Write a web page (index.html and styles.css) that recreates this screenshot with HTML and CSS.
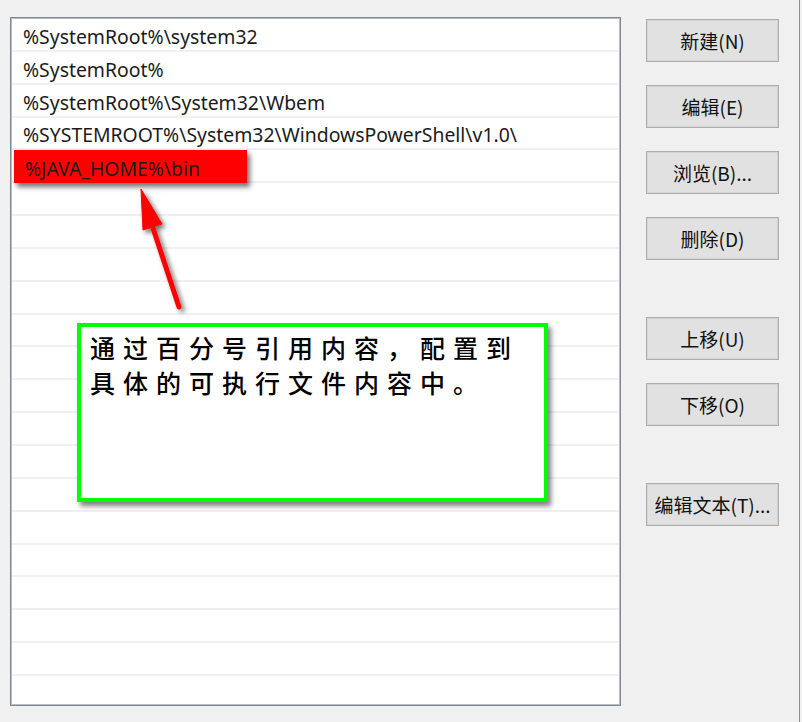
FILE: index.html
```html
<!DOCTYPE html>
<html lang="zh-CN">
<head>
<meta charset="utf-8">
<title>编辑环境变量</title>
<link rel="stylesheet" href="styles.css">
</head>
<body>
<div class="window">
  <div class="list">
    <div class="row"><span class="txt">%SystemRoot%\system32</span></div>
    <div class="row"><span class="txt">%SystemRoot%</span></div>
    <div class="row"><span class="txt">%SystemRoot%\System32\Wbem</span></div>
    <div class="row"><span class="txt">%SYSTEMROOT%\System32\WindowsPowerShell\v1.0\</span></div>
    <div class="row"><span class="mark">%JAVA_HOME%\bin</span></div>
    <div class="row"></div>
    <div class="row"></div>
    <div class="row"></div>
    <div class="row"></div>
    <div class="row"></div>
    <div class="row"></div>
    <div class="row"></div>
    <div class="row"></div>
    <div class="row"></div>
    <div class="row"></div>
    <div class="row"></div>
    <div class="row"></div>
    <div class="row"></div>
    <div class="row"></div>
    <div class="row"></div>
    <div class="row"></div>
  </div>
  <div class="buttons">
    <button class="btn">新建(N)</button>
    <button class="btn">编辑(E)</button>
    <button class="btn">浏览(B)...</button>
    <button class="btn">删除(D)</button>
    <button class="btn btn-sep">上移(U)</button>
    <button class="btn">下移(O)</button>
    <button class="btn btn-sep2">编辑文本(T)...</button>
  </div>
</div>

<svg class="arrow" width="802" height="722" viewBox="0 0 802 722" aria-hidden="true">
  <defs>
    <filter id="sh" x="-50%" y="-50%" width="200%" height="200%">
      <feDropShadow dx="3" dy="3" stdDeviation="2.5" flood-color="#000" flood-opacity="0.55"/>
    </filter>
  </defs>
  <g filter="url(#sh)" fill="#ff0000" stroke="#ff0000">
    <line x1="179" y1="307" x2="151" y2="222" stroke-width="5" stroke-linecap="round"/>
    <polygon points="141,189 162,224 143,230" stroke-width="1" stroke-linejoin="round"/>
  </g>
</svg>

<div class="note">通过百分号引用内容，配置到具体的可执行文件内容中。</div>
</body>
</html>
```
FILE: styles.css
```css
html, body {
  margin: 0;
  padding: 0;
}
body {
  width: 802px;
  height: 722px;
  background: #f0f0f0;
  position: relative;
  overflow: hidden;
  font-family: "Noto Sans", "Noto Sans CJK SC", sans-serif;
}
.window {
  display: flex;
  align-items: flex-start;
  height: 722px;
  width: 800px;
  box-sizing: border-box;
  border-right: 1px solid #8e8e8e;
  padding: 17px 0 0 10px;
}
.list {
  width: 611px;
  height: 689px;
  box-sizing: border-box;
  border: 1px solid #828790;
  box-shadow: inset 0 0 0 1px #b9bcc2;
  background: #fff;
  padding: 1px;
  overflow: hidden;
  display: flex;
  flex-direction: column;
}
.row {
  flex: 0 0 32.85px;
  height: 32.85px;
  box-sizing: border-box;
  border-bottom: 2px solid #f0f0f0;
  display: flex;
  align-items: center;
  font-size: 19.4px;
  color: #1b1b1b;
  padding-top: 4px;
}
.txt {
  padding-left: 11px;
  white-space: nowrap;
}
.mark {
  margin-left: 2px;
  width: 233px;
  height: 33px;
  margin-top: -3px;
  box-sizing: border-box;
  padding-left: 11px;
  padding-top: 5px;
  background: #ff0000;
  display: flex;
  align-items: center;
  box-shadow: 3px 4px 5px rgba(0,0,0,0.55);
  position: relative;
  z-index: 1;
}
.buttons {
  margin-left: 25px;
  margin-top: 2px;
  display: flex;
  flex-direction: column;
  gap: 23px;
  width: 133px;
}
.btn {
  width: 133px;
  height: 43px;
  box-sizing: border-box;
  border: 1px solid #adadad;
  box-shadow: inset 0 0 0 1px #d4d4d4;
  background: #e1e1e1;
  font-family: "Noto Sans CJK SC", sans-serif;
  font-size: 19px;
  color: #111;
  padding: 0;
  white-space: nowrap;
}
.btn-sep {
  margin-top: 34px;
}
.btn-sep2 {
  margin-top: 34px;
}
.arrow {
  position: absolute;
  left: 0;
  top: 0;
  pointer-events: none;
  z-index: 2;
}
.note {
  position: absolute;
  left: 77px;
  top: 323px;
  width: 471px;
  height: 179px;
  box-sizing: border-box;
  border: 4px solid #00ff00;
  background: #fff;
  box-shadow: 3px 4px 5px rgba(0,0,0,0.5);
  padding: 3px 10px 0 9px;
  font-family: "Noto Sans CJK SC", sans-serif;
  font-size: 25px;
  font-weight: 500;
  line-height: 35px;
  letter-spacing: 8px;
  color: #000;
  z-index: 3;
}
```
